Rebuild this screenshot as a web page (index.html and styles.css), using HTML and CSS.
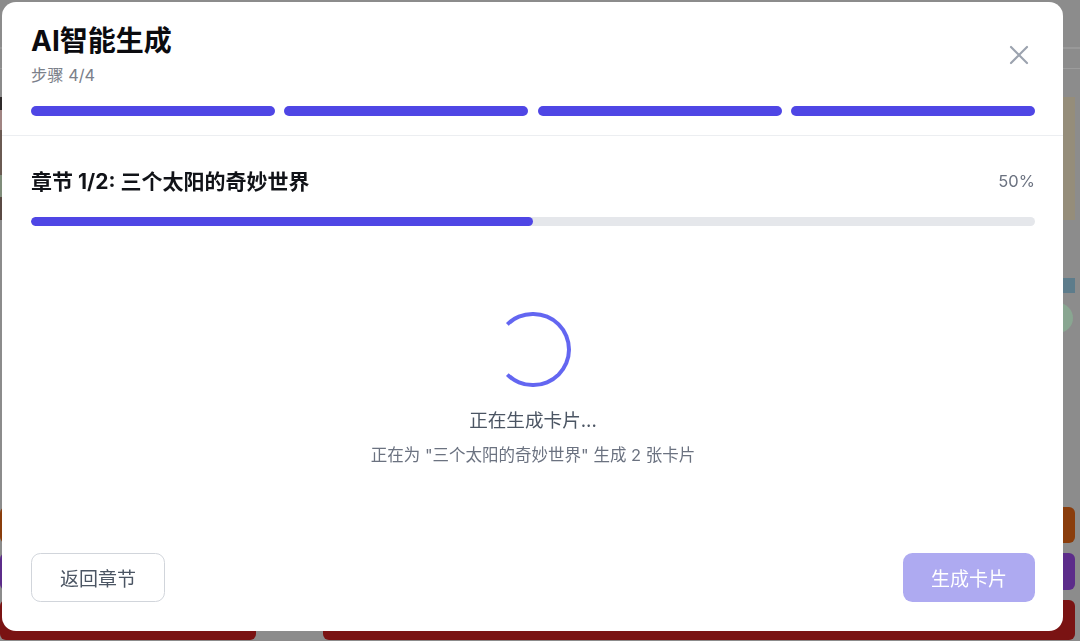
FILE: index.html
```html
<!DOCTYPE html>
<html lang="zh-CN">
<head>
    <meta charset="UTF-8">
    <meta name="viewport" content="width=device-width, initial-scale=1.0">
    <title>AI智能生成</title>
    <link rel="stylesheet" href="styles.css">
</head>
<body>
    <!-- page behind the dialog (dimmed) -->
    <div class="page">
        <div class="topbar"></div>
        <div class="toolbar"></div>
        <div class="columns">
            <div class="card card-left">
                <div class="thumb"></div>
                <div class="meta"></div>
                <div class="actions">
                    <span class="act act-orange"></span>
                    <span class="act act-purple"></span>
                    <span class="act act-red"></span>
                </div>
            </div>
            <div class="card card-right">
                <div class="thumb"></div>
                <div class="meta">
                    <span class="meta-band"></span>
                    <span class="meta-dot"></span>
                </div>
                <div class="actions">
                    <span class="act act-orange"></span>
                    <span class="act act-purple"></span>
                    <span class="act act-red"></span>
                </div>
            </div>
        </div>
    </div>

    <div class="modal">
        <div class="modal-header">
            <div class="header-row">
                <div>
                    <h1 class="modal-title">AI智能生成</h1>
                    <p class="modal-step">步骤 4/4</p>
                </div>
                <button class="close-btn" aria-label="关闭">
                    <svg width="32" height="32" viewBox="0 0 24 24" fill="none" stroke="#9ca3af" stroke-width="1.6" stroke-linecap="round">
                        <path d="M6 6L18 18M18 6L6 18"/>
                    </svg>
                </button>
            </div>
            <div class="steps">
                <span class="step done"></span>
                <span class="step done"></span>
                <span class="step done"></span>
                <span class="step done"></span>
            </div>
        </div>

        <div class="modal-body">
            <div class="chapter-row">
                <h2 class="chapter-title">章节 1/2: 三个太阳的奇妙世界</h2>
                <span class="chapter-pct">50%</span>
            </div>
            <div class="progress">
                <div class="progress-fill" style="width: 50%"></div>
            </div>

            <div class="loading">
                <div class="spinner"></div>
                <p class="loading-text">正在生成卡片...</p>
                <p class="loading-sub">正在为 "三个太阳的奇妙世界" 生成 2 张卡片</p>
            </div>
        </div>

        <div class="modal-footer">
            <button class="btn btn-outline">返回章节</button>
            <button class="btn btn-primary" disabled>生成卡片</button>
        </div>
    </div>
</body>
</html>
```

FILE: styles.css
```css
* {
    margin: 0;
    padding: 0;
    box-sizing: border-box;
}

body {
    background: #8c8c8c;
    font-family: 'Inter', 'Noto Sans CJK SC', sans-serif;
    height: 641px;
    overflow: hidden;
}

/* background page */
.page {
    height: 641px;
    display: flex;
    flex-direction: column;
}

.topbar {
    height: 49px;
    border-bottom: 2px solid #999;
}

.toolbar {
    height: 20px;
    border-bottom: 1px solid #9c9c9c;
}

.columns {
    display: flex;
    gap: 67px;
    padding: 28px 5px 0 0;
}

.card-left {
    width: 256px;
}

.card-right {
    flex: 1;
}

.thumb {
    height: 123px;
}

.card-left .thumb {
    background: linear-gradient(180deg, #2f2a2a 0 13px, #a08482 13px 33px, #6a5a52 33px 78px, #7f8c7a 78px 100px, #5a4a44 100px);
}

.card-right .thumb {
    background: #958d7a;
}

.meta {
    height: 287px;
    display: flex;
    flex-direction: column;
    padding-top: 58px;
}

.meta-band {
    display: block;
    height: 15px;
    background: #5d7c8b;
}

.meta-dot {
    display: block;
    width: 30px;
    height: 30px;
    margin: 10px 2px 0 auto;
    border-radius: 50%;
    background: #89a691;
}

.actions {
    display: flex;
    flex-direction: column;
    gap: 10px;
}

.act {
    display: block;
    height: 37px;
    border-radius: 6px;
}

.act-orange { background: #8a3d0c; height: 36px; }
.act-purple { background: #5c2c8a; }
.act-red { background: #7a1313; height: 40px; }

/* dialog */
.modal {
    position: fixed;
    top: 2px;
    left: 2px;
    width: 1061px;
    height: 629px;
    background: #fff;
    border-radius: 14px;
    display: flex;
    flex-direction: column;
}

.modal-header {
    padding: 20px 28px 19px 29px;
    border-bottom: 1px solid #eceef1;
}

.header-row {
    display: flex;
    justify-content: space-between;
    align-items: center;
}

.modal-title {
    font-size: 28px;
    line-height: 38px;
    font-weight: 700;
    color: #0b0b0f;
}

.modal-step {
    margin-top: 4px;
    font-size: 16.3px;
    line-height: 23.6px;
    color: #7b808a;
}

.close-btn {
    background: none;
    border: none;
    display: flex;
    cursor: pointer;
}

.steps {
    display: flex;
    gap: 9.4px;
    margin-top: 18.6px;
}

.step {
    flex: 1;
    height: 9.4px;
    border-radius: 5px;
    background: #e5e7eb;
}

.step.done {
    background: #4f46e5;
}

.modal-body {
    padding: 29px 28px 0 29px;
}

.chapter-row {
    display: flex;
    justify-content: space-between;
    align-items: center;
}

.chapter-title {
    font-size: 21px;
    line-height: 33px;
    font-weight: 700;
    color: #111318;
}

.chapter-pct {
    font-size: 16.5px;
    color: #6b7280;
}

.progress {
    margin-top: 19px;
    height: 9.4px;
    border-radius: 5px;
    background: #e5e7eb;
    overflow: hidden;
}

.progress-fill {
    height: 100%;
    background: #4f46e5;
    border-radius: 5px;
}

.loading {
    display: flex;
    flex-direction: column;
    align-items: center;
    padding-top: 85.6px;
}

.spinner {
    width: 75.5px;
    height: 75.5px;
    border-radius: 50%;
    border: 4.7px solid #6366f1;
    border-left-color: transparent;
}

.loading-text {
    margin-top: 19.4px;
    font-size: 18.6px;
    line-height: 28.3px;
    color: #4b5563;
}

.loading-sub {
    margin-top: 9px;
    font-size: 16.5px;
    line-height: 23.6px;
    color: #6b7280;
}

.modal-footer {
    margin-top: auto;
    padding: 0 28px 29px 29px;
    display: flex;
    justify-content: space-between;
}

.btn {
    height: 49px;
    padding: 0 28px;
    border-radius: 9.4px;
    font-family: inherit;
    font-size: 19px;
}

.btn-outline {
    background: #fff;
    border: 1px solid #d1d5db;
    color: #4b5563;
}

.btn-primary {
    background: #aeaaf1;
    border: none;
    color: #fff;
}
```
